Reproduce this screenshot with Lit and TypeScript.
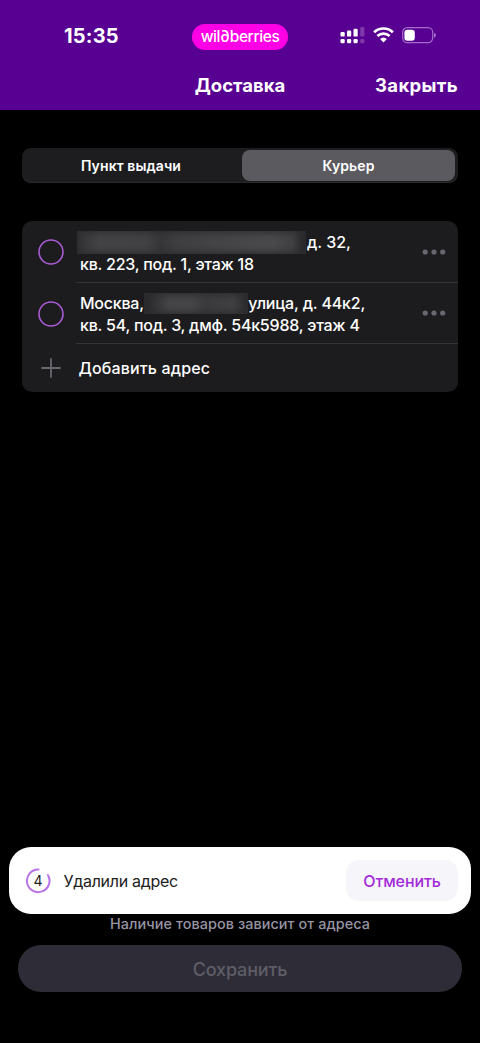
import { LitElement, html, css, svg } from "lit";
import { customElement, property, state } from "lit/decorators.js";

const signal = svg`
  <g fill="#fff">
    <rect x="0.5" y="5" width="4.2" height="4.6" rx="1.2"/><rect x="7" y="3.6" width="4.2" height="6" rx="1.2"/>
    <rect x="13.5" y="1.8" width="4.2" height="7.8" rx="1.2"/>
    <rect x="0.5" y="12" width="4.2" height="4.2" rx="1.2"/><rect x="7" y="12" width="4.2" height="4.2" rx="1.2"/>
    <rect x="13.5" y="12" width="4.2" height="4.2" rx="1.2"/>
  </g>
  <g fill="#fff" opacity=".22">
    <rect x="20.2" y="0" width="4.2" height="9.6" rx="1.2"/><rect x="20.2" y="12" width="4.2" height="4.2" rx="1.2"/>
  </g>`;

@customElement("status-bar")
class StatusBar extends LitElement {
  static styles = css`
    :host { display: grid; grid-template-columns: 192px 96px 1fr; height: 61px; color: #fff; }
    .time { padding: 24px 0 0 64px; font: 700 20px/24px Inter, sans-serif; letter-spacing: 0.2px; }
    .brand { margin-top: 24px; height: 26px; border-radius: 13px; background: #ff00e6; text-align: center;
      font: 500 15.5px/26px Inter, sans-serif; letter-spacing: -0.4px; }
    .icons { display: flex; align-items: flex-start; padding: 27px 0 0 52px; }
    .wifi { margin-left: 7.5px; }
    .battery { margin-left: 8px; }
  `;
  render() {
    return html`
      <div class="time">15:35</div>
      <div class="brand">wil∂berries</div>
      <div class="icons">
        <svg width="25" height="17" viewBox="0 0 25 17">${signal}</svg>
        <svg class="wifi" width="21" height="16" viewBox="0 0 21 16">
          <g fill="none" stroke="#fff" stroke-width="2.7">
            <path d="M1.1 5.3C6.3 .2 14.7 .2 19.9 5.3"/>
            <path d="M4.4 9C7.8 5.7 13.2 5.7 16.6 9"/>
          </g>
          <path d="M10.5 15.4L7.1 12.1Q10.5 9 13.9 12.1Z" fill="#fff"/>
        </svg>
        <svg class="battery" width="35" height="17" viewBox="0 0 35 17">
          <rect x=".7" y=".7" width="30" height="15" rx="4.6" fill="none" stroke="#a66ccc" stroke-width="1.2"/>
          <rect x="2.4" y="2.7" width="10.4" height="11" rx="3" fill="#fff"/>
          <path d="M32 5.8Q34 6.4 34 8.2T32 10.7Z" fill="#a66ccc"/>
        </svg>
      </div>`;
  }
}

@customElement("address-row")
class AddressRow extends LitElement {
  @property({ attribute: false }) before = "";
  @property({ attribute: false }) after = "";
  @property({ attribute: false }) second = "";
  @property({ type: Boolean, reflect: true }) wide = false;
  static styles = css`
    :host { display: grid; grid-template-columns: 54px 1fr; height: 61px; }
    :host([wide]) { height: 62px; }
    .radio { margin: 18px 0 0 16px; width: 26px; height: 26px; }
    .body { display: flex; justify-content: space-between; border-bottom: 1px solid #343436; box-sizing: border-box; height: 100%; }
    .lines { padding: 9px 0 0 4px; color: #fff; font: 500 16px/22px Inter, sans-serif; letter-spacing: -0.23px; white-space: nowrap; }
    :host([wide]) .lines { padding-top: 10px; }
    .line { display: flex; height: 22px; }
    .near { letter-spacing: -0.15px; }
    :host([wide]) .near { letter-spacing: 0; }
    .mask { height: 21px; width: 104px; margin: 1px 0 0 0.5px;
      background: linear-gradient(90deg, #262628 0, #454547 24%, #464648 45%, #3b3b3d 60%, #404042 85%, #2a2a2c);
      box-shadow: inset 0 0 6px 2px #2c2c2e; }
    :host([wide]) .mask { width: 229px; height: 23px; margin: 0 1px 0 -3px;
      background: linear-gradient(90deg, #323234 0, #444446 10%, #424244 30%, #363638 37%, #3f3f41 44%, #444446 60%, #4a4a4c 85%, #404042 94%, #222224);
      box-shadow: inset 0 0 6px 2px #2d2d2f; }
    .dots { margin: 27px 12px 0 0; width: 24px; height: 6px; }
    :host([wide]) .dots { margin-top: 28px; }
  `;
  render() {
    return html`
      <svg class="radio" viewBox="0 0 26 26"><circle cx="13" cy="13" r="12" fill="none" stroke="#aa5bd6" stroke-width="1.6"/></svg>
      <div class="body">
        <div class="lines">
          <div class="line"><span>${this.before}</span><span class="mask"></span><span class="near">${this.after}</span></div>
          <div class="line"><span>${this.second}</span></div>
        </div>
        <svg class="dots" viewBox="0 0 24 6" fill="#69666f"><circle cx="3.2" cy="3" r="2.6"/><circle cx="12" cy="3" r="2.6"/><circle cx="20.7" cy="3" r="2.6"/></svg>
      </div>`;
  }
}

@customElement("undo-toast")
class UndoToast extends LitElement {
  static styles = css`
    :host { display: flex; align-items: center; box-sizing: border-box; height: 67px; margin: 0 9px; padding: 0 13px 0 16px;
      background: #fff; border-radius: 22px; font-family: Inter, sans-serif; }
    .ring { width: 26px; height: 26px; }
    .num { font: 400 14px Inter, sans-serif; }
    .message { flex: 1; margin-left: 12.5px; color: #222; font-size: 16px; letter-spacing: -0.3px; }
    .undo { width: 112px; height: 41px; border-radius: 13px; background: #f6f5f9; color: #a32bd8; text-align: center;
      font-weight: 500; font-size: 16px; line-height: 42px; letter-spacing: -0.1px; }
  `;
  render() {
    return html`
      <svg class="ring" viewBox="0 0 26 26">
        <path d="M13.5 1.5A11.3 11.3 0 1 0 22.9 7" fill="none" stroke="#b873e8" stroke-width="2" stroke-linecap="round"/>
        <text class="num" x="13" y="18" text-anchor="middle" fill="#222">4</text>
      </svg>
      <div class="message">Удалили адрес</div>
      <div class="undo">Отменить</div>`;
  }
}

@customElement("app-root")
class AppRoot extends LitElement {
  @state() private tab = 1;
  static styles = css`
    :host { display: flex; flex-direction: column; height: 1043px; background: #000; font-family: Inter, sans-serif; color: #fff; }
    .top { height: 110px; background: #580092; }
    .nav { display: grid; grid-template-columns: 1fr auto 1fr; padding: 0 22px; font-weight: 700; font-size: 18.5px; line-height: 49px; }
    .title { grid-column: 2; }
    .close { text-align: right; letter-spacing: 0.35px; }
    .tabs { display: grid; grid-template-columns: 1fr 213px; box-sizing: border-box; height: 35px; margin: 38px 22px 0;
      padding: 2px 3px 2px 0; border-radius: 9px; background: #1d1d1f; box-shadow: inset 0 -1px #29292b; }
    .tab { border-radius: 8px; text-align: center; font-weight: 600; font-size: 14px; line-height: 31px; letter-spacing: 0.1px; }
    .tab:first-child { padding-right: 2px; }
    .tab.on { background: #5b5a5f; }
    .card { margin: 38px 22px 0; height: 171px; border-radius: 10px; background: #1c1c1e; overflow: hidden; }
    .add { display: flex; align-items: center; height: 48px; padding-left: 19px; font-weight: 500; font-size: 16px; letter-spacing: 0.15px; }
    .plus { width: 20px; height: 20px; margin-right: 17.5px; }
    .foot { margin-top: auto; height: 196px; }
    .hint { text-align: center; color: #9795a3; font-weight: 500; font-size: 14.4px; line-height: 19px; letter-spacing: 0.08px; height: 31px; }
    .save { margin: 0 18px; height: 47px; border-radius: 23px; background: #2e2d37; color: #5e5d67; text-align: center;
      font-weight: 500; font-size: 18px; line-height: 49px; letter-spacing: -0.15px; }
  `;
  render() {
    return html`
      <div class="top">
        <status-bar></status-bar>
        <div class="nav"><span class="title">Доставка</span><span class="close">Закрыть</span></div>
      </div>
      <div class="tabs">
        ${["Пункт выдачи", "Курьер"].map((t, i) => html`<div class="tab ${i === this.tab ? "on" : ""}">${t}</div>`)}
      </div>
      <div class="card">
        <address-row wide .after=${"д. 32,"} .second=${"кв. 223, под. 1, этаж 18"}></address-row>
        <address-row .before=${"Москва,"} .after=${"улица, д. 44к2,"} .second=${"кв. 54, под. 3, дмф. 54к5988, этаж 4"}></address-row>
        <div class="add">
          <svg class="plus" viewBox="0 0 20 20"><path d="M10 1V19M1 10H19" stroke="#69666f" stroke-width="1.8" stroke-linecap="round"/></svg>
          <span>Добавить адрес</span>
        </div>
      </div>
      <div class="foot">
        <undo-toast></undo-toast>
        <div class="hint">Наличие товаров зависит от адреса</div>
        <div class="save">Сохранить</div>
      </div>`;
  }
}
